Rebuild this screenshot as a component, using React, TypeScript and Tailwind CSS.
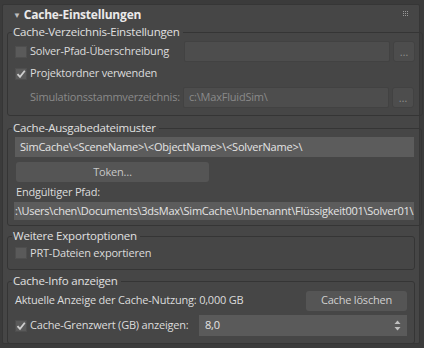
import React from 'react';

const font = { fontFamily: '"Open Sans", "Noto Sans", sans-serif' };

function Check({ checked }: { checked?: boolean }) {
  return (
    <span className="w-[12px] h-[12px] shrink-0 bg-[#5a5a5a] border border-[#4e4e4e] flex items-center justify-center">
      {checked && (
        <svg width="10" height="10" viewBox="0 0 10 10">
          <path d="M1.5 5.2 L4 7.8 L8.8 1.8" fill="none" stroke="#cfcfcf" strokeWidth="1.8" />
        </svg>
      )}
    </span>
  );
}

function Group({ title, children, className = '' }: { title: string; children: React.ReactNode; className?: string }) {
  return (
    <fieldset className={`border border-[#353535] rounded-[3px] px-[7px] ${className}`}>
      <legend className="-ml-[3px] px-[1px] pr-[3px] h-[16px] leading-[16px] text-[11.5px] text-[#e0e0e0]">{title}</legend>
      {children}
    </fieldset>
  );
}

export default function App() {
  return (
    <div className="w-[424px] h-[348px] bg-[#3b3b3b] pt-[4px] overflow-hidden whitespace-nowrap" style={font}>
      <div className="ml-[2px] w-[418px] h-[340px] bg-[#464646] border border-[#363636] rounded-[2px] px-[4px] text-[11px] tracking-[-0.2px] text-[#dcdcdc]">
        {/* Kopfzeile */}
        <div className="h-[19px] flex items-center relative">
          <span className="ml-[6px] text-[8px] text-[#bdbdbd]">▼</span>
          <span className="ml-[3px] font-bold text-[12px] text-[#eaeaea] leading-none">Cache-Einstellungen</span>
          <div className="absolute right-[7px] top-[6px] grid grid-cols-3 gap-[1px]">
            {Array.from({ length: 9 }).map((_, i) => (
              <span key={i} className="w-[1px] h-[1px] bg-[#9a9a9a]" />
            ))}
          </div>
        </div>

        <Group title="Cache-Verzeichnis-Einstellungen" className="pb-[7px]">
          <div className="flex items-center h-[21px] mt-[1px]">
            <Check />
            <span className="ml-[3px] w-[154px]">Solver-Pfad-Überschreibung</span>
            <div className="w-[206px] h-[21px] bg-[#4d4d4d] border border-[#424242] rounded-[2px]" />
            <div className="ml-[3px] w-[22px] h-[21px] bg-[#4d4d4d] border border-[#424242] rounded-[3px] text-[#8c8c8c] flex items-center justify-center leading-none pb-[1px]">…</div>
          </div>
          <div className="flex items-center h-[21px] mt-[1px]">
            <Check checked />
            <span className="ml-[3px]">Projektordner verwenden</span>
          </div>
          <div className="flex items-center h-[21px] mt-[3px]">
            <span className="ml-[15px] w-[153px] text-[#8a8a8a]">Simulationsstammverzeichnis:</span>
            <div className="w-[206px] h-[21px] bg-[#4d4d4d] border border-[#424242] rounded-[2px] text-[#8a8a8a] px-[5px] flex items-center">c:\MaxFluidSim\</div>
            <div className="ml-[3px] w-[22px] h-[21px] bg-[#4d4d4d] border border-[#424242] rounded-[3px] text-[#8c8c8c] flex items-center justify-center leading-none pb-[1px]">…</div>
          </div>
        </Group>

        <Group title="Cache-Ausgabedateimuster" className="mt-[4px] pb-[5px]">
          <div className="h-[20px] mt-[1px] bg-[#5c5c5c] flex items-center px-[5px] text-[#e4e4e4]">
            SimCache\&lt;SceneName&gt;\&lt;ObjectName&gt;\&lt;SolverName&gt;\
          </div>
          <div className="mt-[5px] w-[193px] ml-[1px] h-[20px] bg-[#555555] rounded-[3px] flex items-center justify-center text-[#c8c8c8]">Token…</div>
          <div className="h-[19px] flex items-center mt-[1px] ml-[1px]">Endgültiger Pfad:</div>
          <div className="h-[18px] bg-[#5c5c5c] flex items-center px-[1px] text-[#e4e4e4] overflow-hidden -ml-[1px] tracking-[-0.25px]">
            :\Users\chen\Documents\3dsMax\SimCache\Unbenannt\Flüssigkeit001\Solver01\
          </div>
        </Group>

        <Group title="Weitere Exportoptionen" className="mt-[2px] pb-[7px]">
          <div className="flex items-center h-[18px]">
            <Check />
            <span className="ml-[3px]">PRT-Dateien exportieren</span>
          </div>
        </Group>

        <Group title="Cache-Info anzeigen" className="mt-[3px] pb-[7px]">
          <div className="flex items-center h-[21px] mt-[1px]">
            <span className="flex-1">Aktuelle Anzeige der Cache-Nutzung: 0,000 GB</span>
            <div className="w-[101px] h-[20px] bg-[#555555] rounded-[3px] flex items-center justify-center text-[#d0d0d0]">Cache löschen</div>
          </div>
          <div className="flex items-center h-[21px] mt-[4px]">
            <Check checked />
            <span className="ml-[3px] flex-1">Cache-Grenzwert (GB) anzeigen:</span>
            <div className="w-[208px] h-[21px] bg-[#5a5a5a] flex items-center px-[6px] text-[#e4e4e4]">
              <span className="flex-1">8,0</span>
              <svg width="7" height="11" viewBox="0 0 7 11">
                <path d="M3.5 0.5 L6.5 4 L0.5 4 Z" fill="#c0c0c0" />
                <path d="M3.5 10.5 L6.5 7 L0.5 7 Z" fill="#c0c0c0" />
              </svg>
            </div>
          </div>
        </Group>
      </div>
    </div>
  );
}
